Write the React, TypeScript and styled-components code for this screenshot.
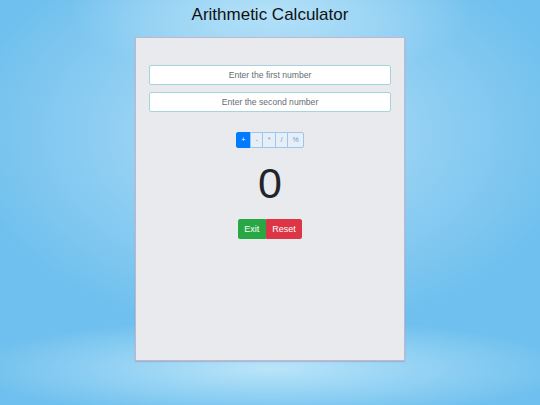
import React, { useState } from "react";
import styled, { createGlobalStyle } from "styled-components";

const GlobalStyle = createGlobalStyle`
  html, body { margin: 0; padding: 0; height: 100%; }
  body {
    min-height: 100vh;
    font-family: "Liberation Sans", Arial, sans-serif;
    background:
      radial-gradient(ellipse 300px 50px at 50% 91%, rgba(190, 231, 250, 0.95), rgba(190, 231, 250, 0) 100%),
      radial-gradient(ellipse 200px 70px at 50% 3%, rgba(184, 227, 249, 0.9), rgba(184, 227, 249, 0) 100%),
      radial-gradient(ellipse 310px 200px at 50% 33%, #b0dff8 0%, #95d1f3 45%, #6fc0ee 100%);
    background-color: #6fc0ee;
  }
  #root { min-height: 100vh; }
`;

const Page = styled.div`
  display: flex;
  flex-direction: column;
  align-items: center;
`;

const Title = styled.h1`
  margin: 5px 0 12px;
  font-size: 17px;
  line-height: 20px;
  font-weight: normal;
  color: #111;
`;

const Card = styled.div`
  box-sizing: border-box;
  width: 270px;
  height: 324px;
  padding: 27px 13px;
  background: #e9eaee;
  border: 1px solid #c4b5cf;
  box-shadow: 0 1px 1px rgba(120, 100, 140, 0.25);
  display: flex;
  flex-direction: column;
  align-items: center;
`;

const Field = styled.input`
  box-sizing: border-box;
  width: 100%;
  height: 20px;
  margin: 0 0 7px;
  padding: 0 6px;
  background: #fff;
  border: 1px solid #a8d2dc;
  border-radius: 2px;
  font-family: "Liberation Sans", Arial, sans-serif;
  font-size: 8.6px;
  text-align: center;
  color: #495057;
  outline: none;
  &::placeholder { color: #666d74; }
`;

const OpGroup = styled.div`
  display: flex;
  margin-top: 13px;
`;

const OpButton = styled.button<{ $active: boolean }>`
  box-sizing: border-box;
  height: 16px;
  padding: 0 4.5px;
  margin-left: -1px;
  font-family: "Liberation Sans", Arial, sans-serif;
  font-size: 7px;
  line-height: 14px;
  border: 1px solid ${(p) => (p.$active ? "#007bff" : "#9cc6f1")};
  background: ${(p) => (p.$active ? "#007bff" : "#e8eef6")};
  color: ${(p) => (p.$active ? "#fff" : "#5b9fe9")};
  border-radius: 0;
  cursor: pointer;
  &:first-child { margin-left: 0; border-radius: 2px 0 0 2px; }
  &:last-child { border-radius: 0 2px 2px 0; }
`;

const Result = styled.div`
  margin-top: 14px;
  font-size: 43px;
  line-height: 43px;
  color: #212529;
`;

const ActionRow = styled.div`
  display: flex;
  margin-top: 14px;
`;

const ActionButton = styled.button<{ $tone: "green" | "red" }>`
  box-sizing: border-box;
  height: 20px;
  padding: 0 5.5px;
  border: 1px solid ${(p) => (p.$tone === "green" ? "#28a745" : "#dc3545")};
  background: ${(p) => (p.$tone === "green" ? "#28a745" : "#dc3545")};
  color: #fff;
  font-family: "Liberation Sans", Arial, sans-serif;
  font-size: 9px;
  cursor: pointer;
  border-radius: 0;
  &:first-child { border-radius: 2px 0 0 2px; }
  &:last-child { border-radius: 0 2px 2px 0; }
`;

const ops = ["+", "-", "*", "/", "%"];

export default function App() {
  const [op, setOp] = useState("+");
  return (
    <>
      <GlobalStyle />
      <Page>
        <Title>Arithmetic Calculator</Title>
        <Card>
          <Field placeholder="Enter the first number" />
          <Field placeholder="Enter the second number" />
          <OpGroup>
            {ops.map((o) => (
              <OpButton key={o} $active={o === op} onClick={() => setOp(o)}>
                {o}
              </OpButton>
            ))}
          </OpGroup>
          <Result>0</Result>
          <ActionRow>
            <ActionButton $tone="green">Exit</ActionButton>
            <ActionButton $tone="red">Reset</ActionButton>
          </ActionRow>
        </Card>
      </Page>
    </>
  );
}
